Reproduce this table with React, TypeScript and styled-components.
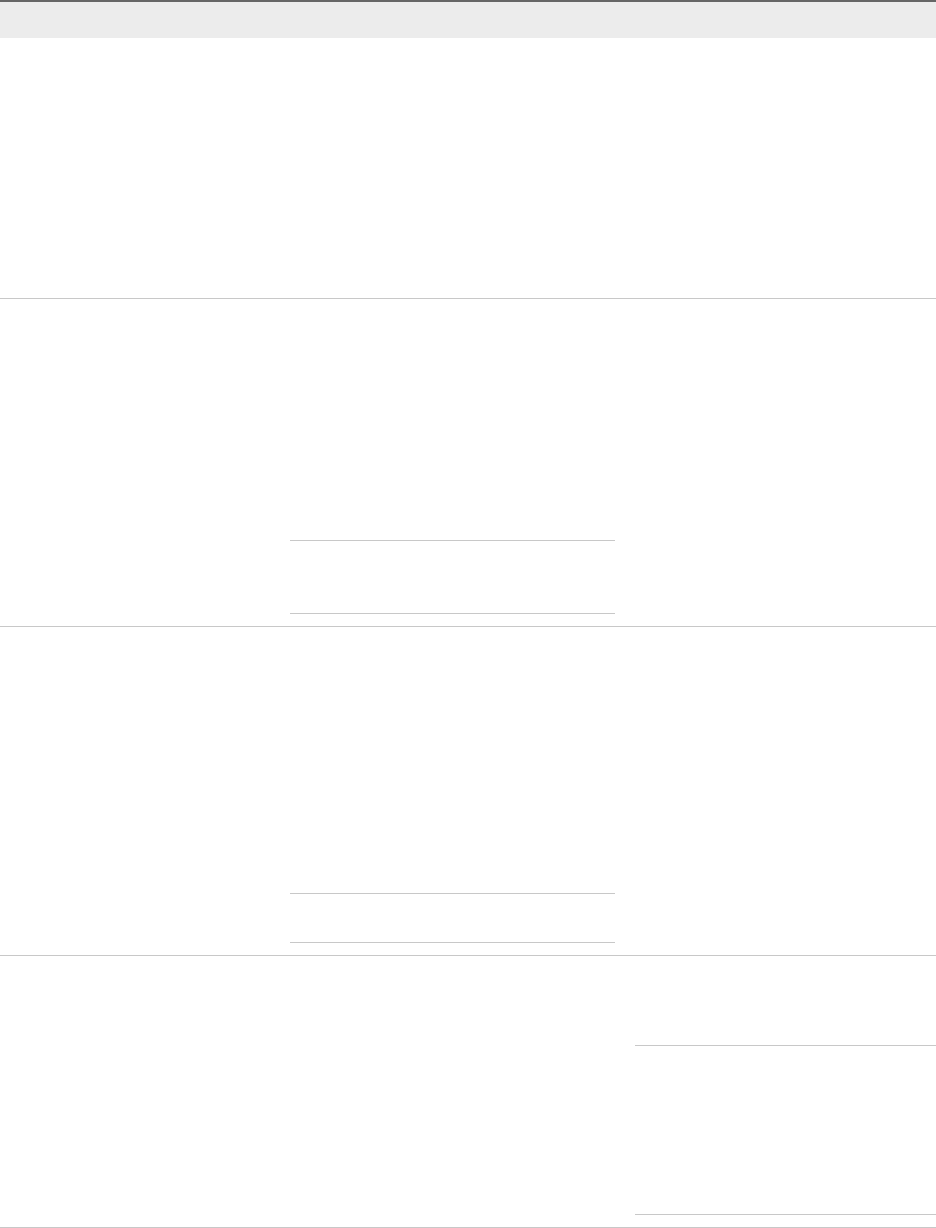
import React from 'react';
import styled, { createGlobalStyle } from 'styled-components';

const GlobalStyle = createGlobalStyle`
  html, body {
    margin: 0;
    padding: 0;
    background: #ffffff;
    font-family: 'Liberation Sans', Arial, sans-serif;
  }
`;

type RowSpec = {
  height: number;
  nested?: { column: 2 | 3; height: number };
};

const rows: RowSpec[] = [
  { height: 261 },
  { height: 328, nested: { column: 2, height: 74 } },
  { height: 329, nested: { column: 2, height: 50 } },
  { height: 272, nested: { column: 3, height: 170 } },
];

const App = () => {
  return (
    <>
      <GlobalStyle />
      <Table>
        <HeaderRow>
          <HeaderCell />
          <HeaderCell />
          <HeaderCell />
        </HeaderRow>
        {rows.map((row, i) => (
          <Row key={i} $height={row.height}>
            {[1, 2, 3].map((col) => (
              <Cell key={col}>
                {row.nested && row.nested.column === col && (
                  <NestedTable $height={row.nested.height} />
                )}
              </Cell>
            ))}
          </Row>
        ))}
      </Table>
    </>
  );
};

const Table = styled.div`
  width: 946px;
  border-top: 2px solid #666666;
  display: flex;
  flex-direction: column;
`;

const HeaderRow = styled.div`
  display: grid;
  grid-template-columns: 280px 345px 1fr;
  height: 36px;
  background-color: #ececec;
`;

const HeaderCell = styled.div`
  padding: 0 10px;
`;

const Row = styled.div<{ $height: number }>`
  display: grid;
  grid-template-columns: 280px 345px 1fr;
  height: ${({ $height }) => $height}px;
  border-bottom: 1px solid #c8c8c8;
  box-sizing: border-box;
`;

const Cell = styled.div`
  padding: 0 10px 12px;
  display: flex;
  flex-direction: column;
  justify-content: flex-end;
`;

const NestedTable = styled.div<{ $height: number }>`
  height: ${({ $height }) => $height}px;
  border-top: 1px solid #c8c8c8;
  border-bottom: 1px solid #c8c8c8;
  box-sizing: border-box;
`;

export default App;
